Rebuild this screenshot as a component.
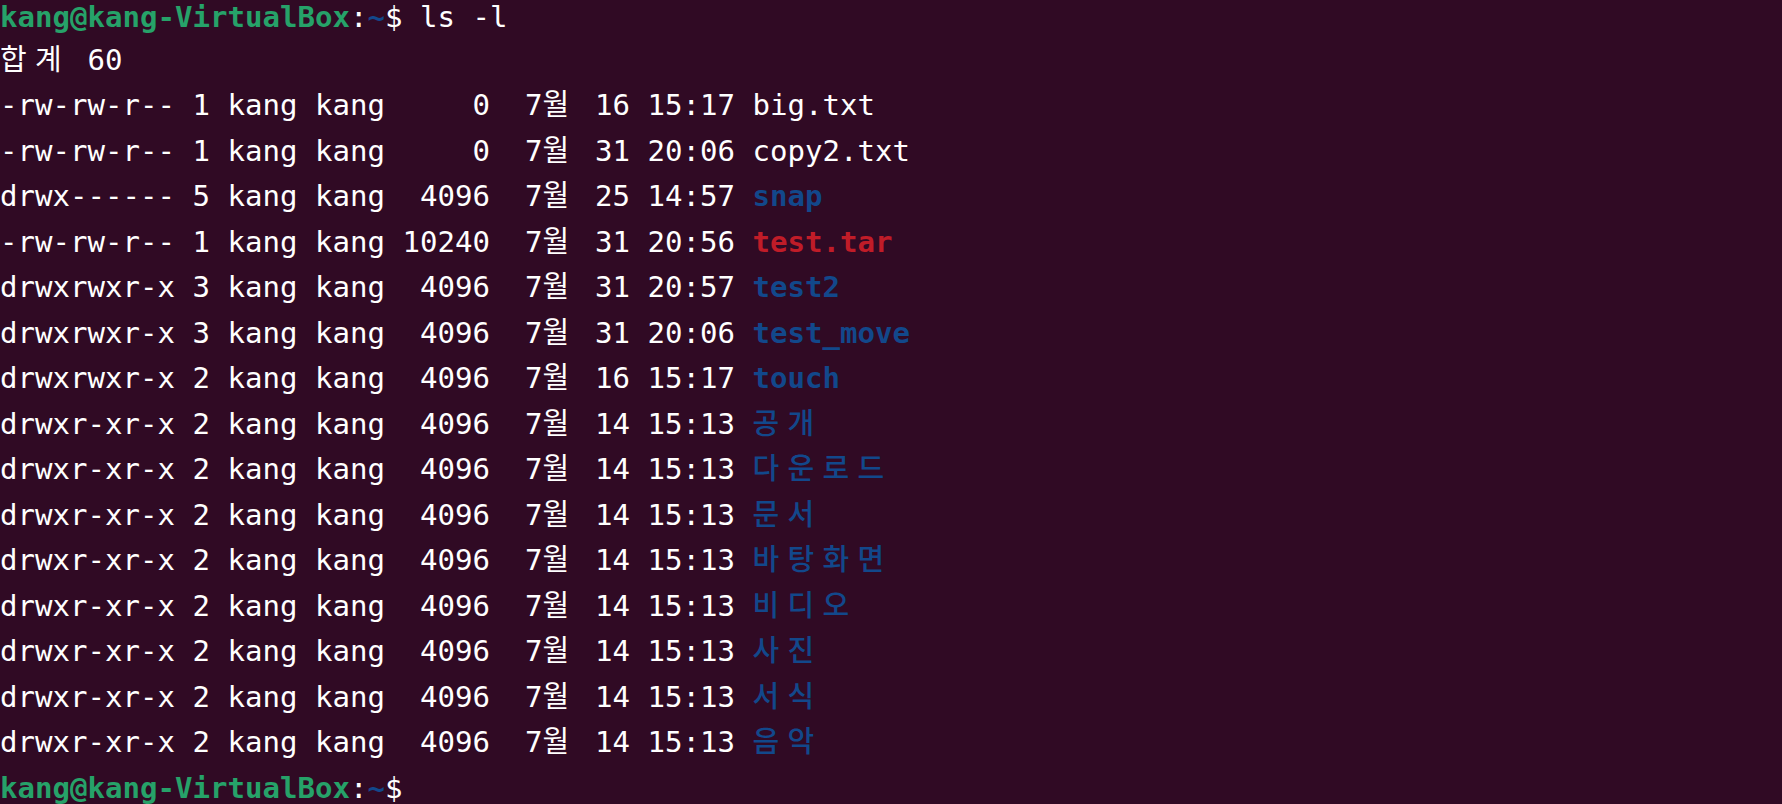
import React from 'react';

const WHITE = 'text-[#ffffff]';

type Tone = 'dir' | 'archive' | 'plain';

function Wide({ children, tone }: { children: React.ReactNode; tone?: string }) {
  return (
    <span
      className={`inline-block w-[35px] text-left align-baseline leading-none text-[29px] font-['Noto_Sans_CJK_KR','Noto_Sans_CJK_SC',sans-serif] ${tone ?? ''}`}
    >
      {children}
    </span>
  );
}

// splits a line into terminal cells: hangul takes two columns
function Cells({ text, tone }: { text: string; tone?: string }) {
  const parts: React.ReactNode[] = [];
  let run = '';
  Array.from(text).forEach((ch, i) => {
    if (/[\uAC00-\uD7A3]/.test(ch)) {
      if (run) {
        parts.push(run);
        run = '';
      }
      parts.push(
        <Wide key={i} tone={tone}>
          {ch}
        </Wide>
      );
    } else {
      run += ch;
    }
  });
  if (run) parts.push(run);
  return <>{parts}</>;
}

function Prompt({ cmd, first }: { cmd?: string; first?: boolean }) {
  return (
    <div className={first ? 'h-[37.5px] leading-[34px]' : 'h-[45.5px]'}>
      <span className="font-bold text-[#26a269]">kang@kang-VirtualBox</span>
      <span className={WHITE}>:</span>
      <span className="font-bold text-[#12488b]">~</span>
      <span className={WHITE}>$ {cmd}</span>
    </div>
  );
}

function Entry({ meta, name, tone }: { meta: string; name: string; tone?: Tone }) {
  const color =
    tone === 'dir' ? 'font-bold text-[#12488b]' : tone === 'archive' ? 'font-bold text-[#c01c28]' : WHITE;
  const wide = tone === 'dir' ? 'font-medium text-[#12488b]' : color;
  return (
    <div className="h-[45.5px]">
      <span className={WHITE}>
        <Cells text={meta} />
      </span>
      <span className={color}>
        <Cells text={name} tone={wide} />
      </span>
    </div>
  );
}

export default function App() {
  const entries: { meta: string; name: string; tone?: Tone }[] = [
    { meta: '-rw-rw-r-- 1 kang kang     0  7월 16 15:17 ', name: 'big.txt' },
    { meta: '-rw-rw-r-- 1 kang kang     0  7월 31 20:06 ', name: 'copy2.txt' },
    { meta: 'drwx------ 5 kang kang  4096  7월 25 14:57 ', name: 'snap', tone: 'dir' },
    { meta: '-rw-rw-r-- 1 kang kang 10240  7월 31 20:56 ', name: 'test.tar', tone: 'archive' },
    { meta: 'drwxrwxr-x 3 kang kang  4096  7월 31 20:57 ', name: 'test2', tone: 'dir' },
    { meta: 'drwxrwxr-x 3 kang kang  4096  7월 31 20:06 ', name: 'test_move', tone: 'dir' },
    { meta: 'drwxrwxr-x 2 kang kang  4096  7월 16 15:17 ', name: 'touch', tone: 'dir' },
    { meta: 'drwxr-xr-x 2 kang kang  4096  7월 14 15:13 ', name: '공개', tone: 'dir' },
    { meta: 'drwxr-xr-x 2 kang kang  4096  7월 14 15:13 ', name: '다운로드', tone: 'dir' },
    { meta: 'drwxr-xr-x 2 kang kang  4096  7월 14 15:13 ', name: '문서', tone: 'dir' },
    { meta: 'drwxr-xr-x 2 kang kang  4096  7월 14 15:13 ', name: '바탕화면', tone: 'dir' },
    { meta: 'drwxr-xr-x 2 kang kang  4096  7월 14 15:13 ', name: '비디오', tone: 'dir' },
    { meta: 'drwxr-xr-x 2 kang kang  4096  7월 14 15:13 ', name: '사진', tone: 'dir' },
    { meta: 'drwxr-xr-x 2 kang kang  4096  7월 14 15:13 ', name: '서식', tone: 'dir' },
    { meta: 'drwxr-xr-x 2 kang kang  4096  7월 14 15:13 ', name: '음악', tone: 'dir' },
  ];

  return (
    <div className="h-[804px] w-full overflow-hidden bg-[#300a24]">
      <div className="whitespace-pre font-['DejaVu_Sans_Mono','Noto_Sans_CJK_KR',monospace] text-[29.07px] leading-[45.5px] text-white">
        <Prompt cmd="ls -l" first />
        <div className="h-[45.5px]">
          <Cells text="합계 60" />
        </div>
        {entries.map((e) => (
          <Entry key={e.name} meta={e.meta} name={e.name} tone={e.tone} />
        ))}
        <Prompt />
      </div>
    </div>
  );
}
